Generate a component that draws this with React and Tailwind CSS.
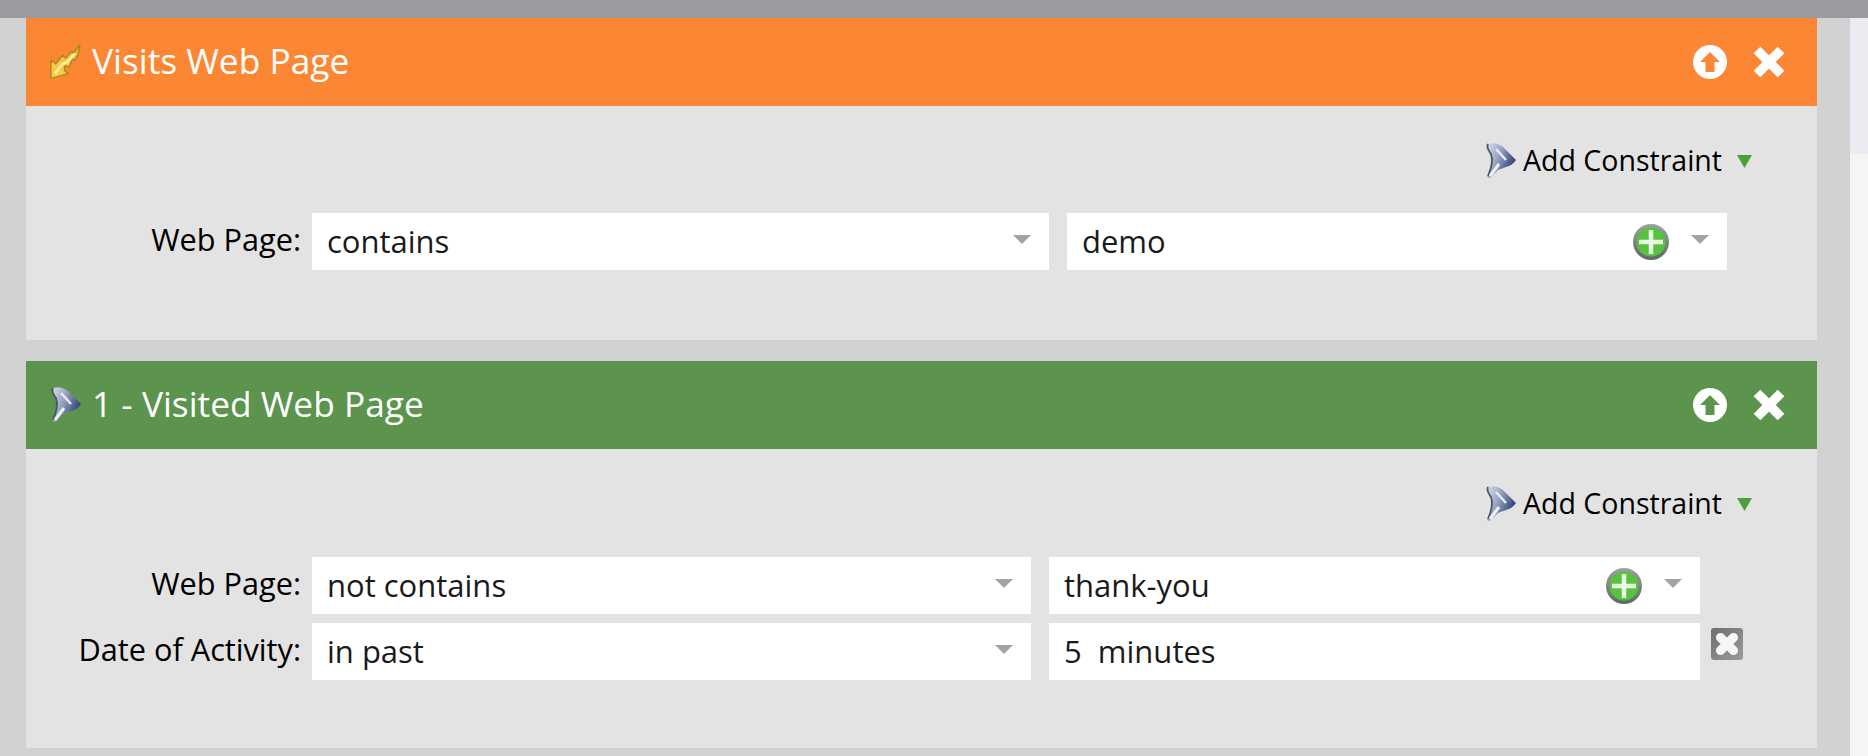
function BoltIcon() {
  return (
    <svg width="31" height="36" viewBox="0 0 32 36" className="shrink-0 blur-[0.5px]">
      <defs>
        <linearGradient id="bolt" x1="0" y1="1" x2="1" y2="0">
          <stop offset="0" stopColor="#f6d24a" />
          <stop offset="0.55" stopColor="#f3c53a" />
          <stop offset="1" stopColor="#e9a92c" />
        </linearGradient>
      </defs>
      <path
        d="M1 35 L1 16 L6 20 L13 11 L16 14 L22 7 L24 9 L31 0 L29 11 L26 16 L23 15 L20 23 L15 22 L15 27 L19 30 Z"
        fill="url(#bolt)"
        stroke="#a9842a"
        strokeWidth="1.4"
        strokeLinejoin="round"
      />
      <path d="M6 29 L13 20 L18 18 L25 10" fill="none" stroke="#fbeaa0" strokeWidth="3" strokeLinecap="round" />
    </svg>
  );
}

function FunnelIcon({ id }) {
  return (
    <svg width="32" height="36" viewBox="0 0 32 36" className="shrink-0 blur-[0.5px]">
      <defs>
        <linearGradient id={id} x1="0" y1="0" x2="1" y2="0.5">
          <stop offset="0" stopColor="#d8dde8" />
          <stop offset="0.45" stopColor="#98a6c6" />
          <stop offset="1" stopColor="#2b3f74" />
        </linearGradient>
      </defs>
      <path d="M3 1 C8 -1 14 1 18 4 L31 17 C28 21 25 23 21 24 L13 27 L5 35 L2 34 L6 24 C8 18 7 13 5 10 C3 7 1 4 3 1 Z" fill={`url(#${id})`} />
      <path d="M3 1 C1 5 4 8 6 11 C8 17 7 24 3 33" fill="none" stroke="#4b5563" strokeWidth="1.8" />
      <path d="M5 33 L14 21" stroke="#eef0f4" strokeWidth="3" />
      <path d="M11 6 L21 17" stroke="#e8ebf2" strokeWidth="2.5" />
    </svg>
  );
}

function UpIcon({ arrowClass }) {
  return (
    <svg width="34" height="34" viewBox="0 0 34 34" className={`shrink-0 ${arrowClass}`}>
      <circle cx="17" cy="17" r="17" fill="#fff" />
      <path d="M17 7 L27 17 L21.5 17 L21.5 27 L12.5 27 L12.5 17 L7 17 Z" fill="currentColor" />
    </svg>
  );
}

function CloseIcon() {
  return (
    <svg width="34" height="34" viewBox="0 0 34 34" className="shrink-0">
      <path d="M5 5 L29 29 M29 5 L5 29" stroke="#fff" strokeWidth="9.5" />
    </svg>
  );
}

function PlusIcon({ id }) {
  return (
    <svg width="36" height="36" viewBox="0 0 36 36" className="shrink-0 blur-[0.3px]">
      <defs>
        <linearGradient id={id} x1="0" y1="0" x2="0" y2="1">
          <stop offset="0" stopColor="#9aa39c" />
          <stop offset="1" stopColor="#5c6a60" />
        </linearGradient>
      </defs>
      <circle cx="18" cy="18" r="18" fill={`url(#${id})`} />
      <circle cx="18" cy="18" r="14.5" fill="#57c23f" />
      <path d="M18 6 V30 M6 18 H30" stroke="#e9f7e4" strokeWidth="4.5" />
    </svg>
  );
}

function Caret() {
  return <span className="mb-[5px] h-0 w-0 shrink-0 border-x-[9px] border-t-[9px] border-x-transparent border-t-[#a3a3a3]" />;
}

function RemoveIcon() {
  return (
    <svg width="32" height="32" viewBox="0 0 32 32" className="shrink-0 blur-[0.5px]">
      <defs>
        <linearGradient id="remove" x1="0" y1="0" x2="1" y2="1">
          <stop offset="0" stopColor="#6f6f6f" />
          <stop offset="1" stopColor="#9a9a9a" />
        </linearGradient>
      </defs>
      <rect width="32" height="32" rx="3" fill="url(#remove)" />
      <path d="M9.5 9.5 L22.5 22.5 M22.5 9.5 L9.5 22.5" stroke="#f6f6f6" strokeWidth="9" strokeLinecap="round" />
    </svg>
  );
}

function CardHeader({ color, icon, title, titleClass, arrowClass }) {
  return (
    <div className={`flex h-[88px] items-center pl-[24px] pr-[31px] text-[35.3px] text-white ${color}`}>
      {icon}
      <span className={`flex-1 pb-[3px] ${titleClass}`}>{title}</span>
      <div className="flex items-center gap-[25px]">
        <UpIcon arrowClass={arrowClass} />
        <CloseIcon />
      </div>
    </div>
  );
}

function AddConstraint({ id }) {
  return (
    <div className="flex items-center justify-end pr-[65px] text-[28.5px] leading-[43px] text-black">
      <FunnelIcon id={id} />
      <span className="ml-[6px]">Add Constraint</span>
      <svg width="15" height="14" viewBox="0 0 15 14" className="ml-[15px] blur-[0.3px]">
        <path d="M0 1 H15 L7.5 14 Z" fill="#4d9f38" />
      </svg>
    </div>
  );
}

function Field({ className, children }) {
  return (
    <div className={`flex h-[57px] items-center bg-white text-[31px] text-[#1a1a1a] ${className}`}>
      {children}
    </div>
  );
}

function Label({ children }) {
  return <div className="w-[275px] pb-[4px] text-right text-[30.7px] text-black">{children}</div>;
}

export default function App() {
  return (
    <div className="flex h-[756px] w-[1868px] flex-col overflow-hidden bg-[#d2d2d2] font-['Open_Sans',sans-serif]">
      <div className="h-[18px] shrink-0 bg-[#9a9a9f]" />
      <div className="flex min-h-0 flex-1">
        <div className="flex w-[1850px] shrink-0 flex-col gap-[21px] pl-[26px] pr-[33px]">
          <section className="bg-[#e3e3e3]">
            <CardHeader
              color="bg-[#fb8735]"
              icon={<BoltIcon />}
              title="Visits Web Page"
              titleClass="ml-[11px]"
              arrowClass="text-[#fb8735]"
            />
            <div className="h-[234px] pt-[33px]">
              <AddConstraint id="funnel-a" />
              <div className="mt-[31px] flex items-center">
                <Label>Web Page:</Label>
                <Field className="ml-[11px] w-[737px] justify-between pl-[15px] pr-[18px]">
                  <span>contains</span>
                  <Caret />
                </Field>
                <Field className="ml-[18px] w-[660px] pl-[15px] pr-[18px]">
                  <span className="flex-1">demo</span>
                  <PlusIcon id="plus-a" />
                  <span className="ml-[22px] flex"><Caret /></span>
                </Field>
              </div>
            </div>
          </section>
          <section className="bg-[#e3e3e3]">
            <CardHeader
              color="bg-[#5c944e]"
              icon={<FunnelIcon id="funnel-b" />}
              title="1 - Visited Web Page"
              titleClass="ml-[10px]"
              arrowClass="text-[#5c944e]"
            />
            <div className="h-[299px] pt-[33px]">
              <AddConstraint id="funnel-c" />
              <div className="mt-[32px] flex flex-col gap-[9px]">
                <div className="flex items-center">
                  <Label>Web Page:</Label>
                  <Field className="ml-[11px] w-[719px] justify-between pl-[15px] pr-[18px]">
                    <span>not contains</span>
                    <Caret />
                  </Field>
                  <Field className="ml-[18px] w-[651px] pl-[15px] pr-[18px]">
                    <span className="flex-1">thank-you</span>
                    <PlusIcon id="plus-b" />
                    <span className="ml-[22px] flex"><Caret /></span>
                  </Field>
                </div>
                <div className="flex items-center">
                  <Label>Date of Activity:</Label>
                  <Field className="ml-[11px] w-[719px] justify-between pl-[15px] pr-[18px]">
                    <span>in past</span>
                    <Caret />
                  </Field>
                  <Field className="ml-[18px] w-[651px] pl-[15px]">
                    <span className="whitespace-pre">5  minutes</span>
                  </Field>
                  <div className="mb-[16px] ml-[11px] flex"><RemoveIcon /></div>
                </div>
              </div>
            </div>
          </section>
        </div>
        <div className="flex flex-1 flex-col">
          <div className="h-[136px] bg-[#ebebf1]" />
          <div className="flex-1 bg-[#f5f5f5]" />
        </div>
      </div>
    </div>
  );
}
